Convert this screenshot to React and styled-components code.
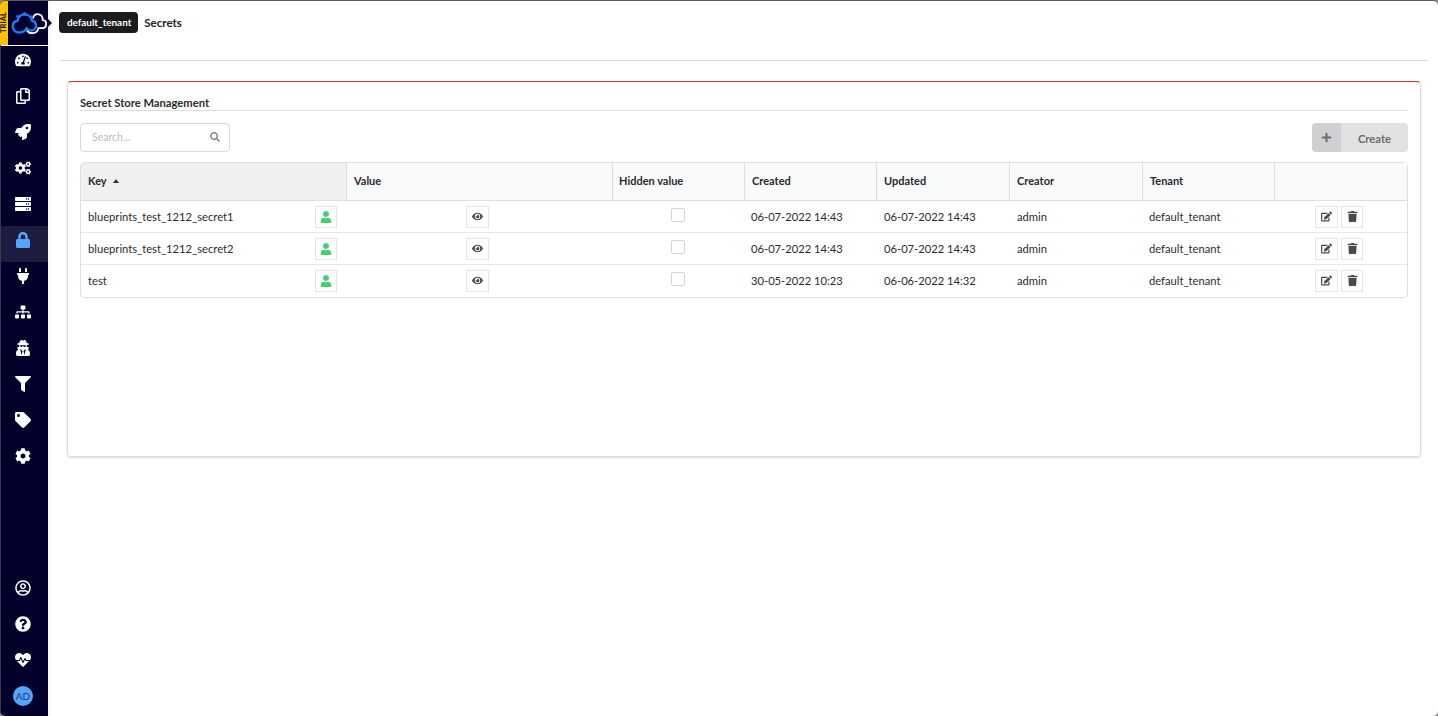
import styled, { createGlobalStyle } from 'styled-components'
import {
  FaTachometerAlt, FaRegCopy, FaRocket, FaCogs, FaServer, FaLock, FaPlug, FaSitemap,
  FaUserSecret, FaFilter, FaTag, FaCog, FaRegUserCircle, FaQuestionCircle, FaHeartbeat,
  FaUser, FaEye, FaEdit, FaTrash, FaSearch, FaPlus,
} from 'react-icons/fa'

const GlobalStyle = createGlobalStyle`
  html, body { margin: 0; padding: 0; height: 100%; background: #8a8a8a; }
  #root { height: 100%; }
  * { box-sizing: border-box; }
`

const Page = styled.div`
  display: flex;
  height: 716px;
  overflow: hidden;
  border-radius: 5px;
  border-top: 1px solid #5a5a5a;
  background: #fff;
  font-family: Lato, "Open Sans", sans-serif;
  font-size: 12px;
  color: #2b2b2b;
`

const Sidebar = styled.nav`
  display: flex;
  flex-direction: column;
  width: 48px;
  flex-shrink: 0;
  background: #04002c;
  border-left: 1px solid #3a3a55;
`

const Brand = styled.div`
  display: flex;
  align-items: center;
  height: 45px;
  flex-shrink: 0;
  border-bottom: 1px solid #fff;
`

const Trial = styled.div`
  display: flex;
  align-items: center;
  justify-content: center;
  width: 8px;
  height: 44px;
  margin-left: -1px;
  background: #ffc304;
  color: #2a2000;
  font-size: 7.5px;
  line-height: 8px;
  font-weight: 900;
  writing-mode: vertical-rl;
  transform: rotate(180deg);
`

const Menu = styled.div`
  display: flex;
  flex-direction: column;
`

const BottomMenu = styled(Menu)`
  margin-top: auto;
  padding-bottom: 2px;
`

const Item = styled.div`
  display: flex;
  align-items: flex-start;
  justify-content: center;
  height: 36px;
  padding: ${p => (p.$bottom ? '10px' : '6px')} 3px 0 0;
  color: ${p => (p.$active ? '#55a4ff' : '#fff')};
  background: ${p => (p.$active ? '#1e1b40' : 'transparent')};
  svg { height: 16px; width: auto; }
`

const Avatar = styled.div`
  display: flex;
  align-items: center;
  justify-content: center;
  width: 20px;
  height: 20px;
  margin-top: -2px;
  border-radius: 50%;
  background: #55a4ff;
  color: #2a3a66;
  font-size: 10px;
`

const Main = styled.main`
  position: relative;
  flex: 1;
  min-width: 0;
  padding: 0 9px 0 11px;
  box-shadow: inset 6px 0 6px -6px rgba(0, 0, 0, 0.08);
`

const Arrow = styled.div`
  position: absolute;
  left: 0;
  top: 18px;
  width: 0;
  height: 0;
  border-top: 4px solid transparent;
  border-bottom: 4px solid transparent;
  border-left: 4px solid #04002c;
`

const TopBar = styled.header`
  display: flex;
  align-items: center;
  gap: 6px;
  height: 60px;
  padding-bottom: 17px;
  border-bottom: 1px solid #dcdcdc;
`

const Tenant = styled.div`
  display: flex;
  align-items: center;
  height: 21px;
  padding: 0 7px 0 8px;
  border-radius: 4px;
  background: #1b1c1d;
  color: #fff;
  font-size: 9.9px;
  font-weight: 700;
`

const Crumb = styled.div`
  font-size: 11.5px;
  font-weight: 700;
  color: #222;
`

const Card = styled.section`
  height: 376px;
  margin: 20px 8px 0 8px;
  padding: 14px 12px 0;
  border: 1px solid #dededf;
  border-top: 1px solid #c9302c;
  border-radius: 4px;
  box-shadow: 0 1px 2px rgba(34, 36, 38, 0.15);
`

const Title = styled.h4`
  margin: 0 0 12px;
  height: 15px;
  border-bottom: 1px solid #dcdcdc;
  font-size: 11.2px;
  line-height: 14px;
  font-weight: 700;
  color: #2b2b2b;
`

const Toolbar = styled.div`
  display: flex;
  justify-content: space-between;
  margin-bottom: 10px;
`

const Search = styled.div`
  display: flex;
  align-items: center;
  justify-content: space-between;
  width: 150px;
  height: 29px;
  padding: 0 9px 1px 11px;
  border: 1px solid #d9d9da;
  border-radius: 4px;
  color: #bdbdbd;
  font-size: 10.5px;
  svg { color: #8a8a8a; font-size: 10px; }
`

const CreateButton = styled.div`
  display: flex;
  width: 96px;
  height: 29px;
  border-radius: 4px;
  overflow: hidden;
  background: #e0e1e2;
  color: #6c6c6c;
  font-size: 11.2px;
  font-weight: 700;
`

const CreateIcon = styled.span`
  display: flex;
  align-items: center;
  justify-content: center;
  width: 29px;
  background: #cfd0d1;
  font-size: 11px;
`

const CreateLabel = styled.span`
  flex: 1;
  display: flex;
  align-items: center;
  justify-content: center;
  padding-top: 1px;
`

const Table = styled.table`
  width: 100%;
  table-layout: fixed;
  border-collapse: separate;
  border-spacing: 0;
  border: 1px solid #dededf;
  border-radius: 4px;
  font-size: 11.2px;
`

const Th = styled.th`
  height: 38px;
  padding: 0 7px 2px ${p => p.$left || 7}px;
  text-align: left;
  font-size: 11px;
  font-weight: 700;
  color: #2b2b2b;
  background: ${p => (p.$sorted ? '#f0f0f0' : '#f9fafb')};
  border-bottom: 1px solid #dededf;
  border-right: ${p => (p.$last ? 'none' : '1px solid #dededf')};
`

const SortArrow = styled.span`
  display: inline-block;
  margin: 0 0 2px 6px;
  border-left: 3.5px solid transparent;
  border-right: 3.5px solid transparent;
  border-bottom: 4px solid #333;
`

const Td = styled.td`
  height: 32px;
  padding: 0 ${p => p.$right || 7}px ${p => (p.$last ? 1 : 0)}px ${p => p.$left || 7}px;
  color: #2b2b2b;
  border-bottom: ${p => (p.$last ? 'none' : '1px solid #e6e6e6')};
  text-align: ${p => p.$align || 'left'};
`

const KeyCell = styled.div`
  display: flex;
  align-items: center;
  justify-content: space-between;
  padding-right: 3px;
`

const IconBox = styled.span`
  display: inline-flex;
  align-items: center;
  justify-content: center;
  vertical-align: middle;
  width: ${p => p.$width || 22}px;
  height: 22px;
  border: 1px solid #e4e4e4;
  color: ${p => p.$color || '#4a4a4a'};
  background: #fff;
  svg { height: ${p => p.$icon || 11}px; width: auto; }
`

const Actions = styled.div`
  display: flex;
  justify-content: center;
  gap: 3px;
  padding-right: 4px;
`

const Check = styled.span`
  display: inline-block;
  vertical-align: middle;
  width: 14px;
  height: 14px;
  margin: -6px 0 0 -3px;
  border: 1px solid #d4d4d5;
  border-radius: 2px;
`

const columns = [266, 266, 132, 132, 133, 133, 132, 132]

const rows = [
  ['blueprints_test_1212_secret1', '06-07-2022 14:43', '06-07-2022 14:43'],
  ['blueprints_test_1212_secret2', '06-07-2022 14:43', '06-07-2022 14:43'],
  ['test', '30-05-2022 10:23', '06-06-2022 14:32'],
]

const topItems = [
  [FaTachometerAlt], [FaRegCopy], [FaRocket], [FaCogs], [FaServer], [FaLock, true],
  [FaPlug], [FaSitemap], [FaUserSecret], [FaFilter], [FaTag], [FaCog],
]

const Logo = () => (
  <svg width="37" height="26" viewBox="0 0 37 26" fill="none" style={{ marginLeft: 3, marginTop: 1 }}>
    <path d="M22 7c1-2.800 3.400-4.200 5.800-3.700 2.600.6 4.200 3 3.800 5.600 2.400.4 3.700 2.300 3.500 4.400-.2 2.300-2 3.900-4.300 3.900h-3.400c-.5 3-3 5-6.200 5-2 0-3.900-.9-5-2.500" stroke="#fff" strokeWidth="1.800" strokeLinecap="round" />
    <path d="M8.500 21.500c-4 0-6.800-2.500-6.800-6 0-3 2.100-5.300 4.900-5.800C7.100 6 10 3.500 13.500 3.500c4 0 7 2.800 7.400 6.300 2.500.5 4.100 2.500 4.100 4.900 0 2.900-2.200 4.800-4.800 4.800-2 0-3.500-.9-4.500-2.400-1.200 2.700-3.800 4.400-7.200 4.400z" stroke="#1d78f2" strokeWidth="2.400" strokeLinejoin="round" />
    <path d="M12 3.800l.4-2.600h2.400l.4 2.600M19 5.800l1.700-1.700 1.600 1.600-1.500 1.900M6.500 6.800L4.700 5.400l1.500-1.700 2 1.400" fill="#1d78f2" />
  </svg>
)

const App = () => (
  <Page>
    <GlobalStyle />
    <Sidebar>
      <Brand>
        <Trial>TRIAL</Trial>
        <Logo />
      </Brand>
      <Menu>
        {topItems.map(([Icon, active], i) => (
          <Item key={i} $active={active}><Icon /></Item>
        ))}
      </Menu>
      <BottomMenu>
        <Item $bottom><FaRegUserCircle /></Item>
        <Item $bottom><FaQuestionCircle /></Item>
        <Item $bottom><FaHeartbeat /></Item>
        <Item $bottom><Avatar>AD</Avatar></Item>
      </BottomMenu>
    </Sidebar>
    <Main>
      <Arrow />
      <TopBar>
        <Tenant>default_tenant</Tenant>
        <Crumb>Secrets</Crumb>
      </TopBar>
      <Card>
        <Title>Secret Store Management</Title>
        <Toolbar>
          <Search>Search...<FaSearch /></Search>
          <CreateButton>
            <CreateIcon><FaPlus /></CreateIcon>
            <CreateLabel>Create</CreateLabel>
          </CreateButton>
        </Toolbar>
        <Table>
          <colgroup>
            {columns.map((w, i) => <col key={i} style={{ width: w }} />)}
          </colgroup>
          <thead>
            <tr>
              <Th $sorted>Key<SortArrow /></Th>
              <Th>Value</Th>
              <Th $left={6}>Hidden value</Th>
              <Th>Created</Th>
              <Th>Updated</Th>
              <Th>Creator</Th>
              <Th>Tenant</Th>
              <Th $last />
            </tr>
          </thead>
          <tbody>
            {rows.map(([key, created, updated], i) => {
              const last = i === rows.length - 1
              return (
                <tr key={key}>
                  <Td $last={last}>
                    <KeyCell>{key}<IconBox $color="#45cf6f" $icon={12}><FaUser /></IconBox></KeyCell>
                  </Td>
                  <Td $last={last} $align="center" $right={13}><IconBox $width={23}><FaEye /></IconBox></Td>
                  <Td $last={last} $align="center"><Check /></Td>
                  <Td $last={last} $left={6}>{created}</Td>
                  <Td $last={last}>{updated}</Td>
                  <Td $last={last}>admin</Td>
                  <Td $last={last} $left={6}>default_tenant</Td>
                  <Td $last={last}>
                    <Actions>
                      <IconBox $width={23}><FaEdit /></IconBox>
                      <IconBox><FaTrash /></IconBox>
                    </Actions>
                  </Td>
                </tr>
              )
            })}
          </tbody>
        </Table>
      </Card>
    </Main>
  </Page>
)

export default App
